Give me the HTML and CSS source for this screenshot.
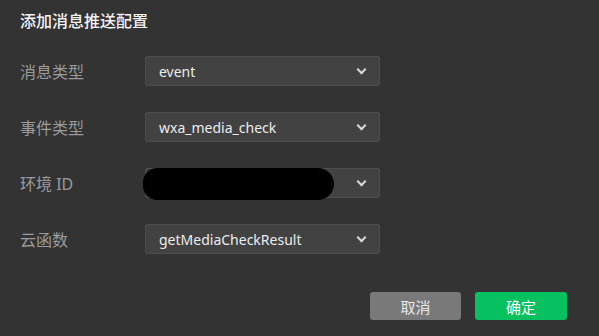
FILE: index.html
```html
<!DOCTYPE html>
<html lang="zh">

<head>
    <meta charset="UTF-8">
    <title>添加消息推送配置</title>
    <link rel="stylesheet" href="styles.css">
</head>

<body>
    <div class="dialog">
        <h1 class="dialog-title">添加消息推送配置</h1>

        <!-- 配置表单 -->
        <div class="form">
            <label class="form-label">消息类型</label>
            <div class="select">
                <span class="select-value">event</span>
                <span class="chevron"></span>
            </div>

            <label class="form-label">事件类型</label>
            <div class="select">
                <span class="select-value">wxa_media_check</span>
                <span class="chevron"></span>
            </div>

            <label class="form-label">环境 ID</label>
            <div class="select redacted">
                <span class="select-value"></span>
                <span class="chevron"></span>
                <span class="blot"></span>
            </div>

            <label class="form-label">云函数</label>
            <div class="select">
                <span class="select-value">getMediaCheckResult</span>
                <span class="chevron"></span>
            </div>
        </div>

        <!-- 底部按钮 -->
        <div class="footer">
            <button class="btn btn-cancel">取消</button>
            <button class="btn btn-ok">确定</button>
        </div>
    </div>
</body>

</html>
```

FILE: styles.css
```css
* {
    margin: 0;
    padding: 0;
    box-sizing: border-box;
}

body {
    background-color: #333333;
    font-family: "Noto Sans", "Noto Sans CJK SC", sans-serif;
    font-size: 14px;
    color: #e6e6e6;
    width: 599px;
    height: 336px;
    overflow: hidden;
}

.dialog {
    padding: 10px 32px 0 20px;
}

.dialog-title {
    font-size: 16px;
    font-weight: 500;
    line-height: 22px;
    color: #f2f2f2;
}

/* 表单 */
.form {
    display: grid;
    grid-template-columns: 125px 235px;
    grid-auto-rows: 30px;
    row-gap: 26px;
    margin-top: 24px;
    align-items: center;
}

.form-label {
    color: #9c9c9c;
    font-size: 16px;
}

.select {
    position: relative;
    height: 30px;
    display: flex;
    align-items: center;
    justify-content: space-between;
    padding: 0 14px 0 13px;
    background-color: #424242;
    border: 1px solid #4d4d4d;
    border-radius: 2px;
}

.select-value {
    color: #ececec;
    font-size: 14px;
}

.chevron {
    width: 7px;
    height: 7px;
    border-right: 2px solid #d8d8d8;
    border-bottom: 2px solid #d8d8d8;
    transform: rotate(45deg);
    margin-top: -4px;
}

/* 遮挡 */
.blot {
    position: absolute;
    left: -3px;
    top: -1px;
    width: 191px;
    height: 32px;
    background-color: #000000;
    border-radius: 16px 18px 18px 16px;
}

/* 按钮 */
.footer {
    display: flex;
    justify-content: flex-end;
    gap: 14px;
    margin-top: 38px;
}

.btn {
    width: 92px;
    height: 28px;
    border: none;
    border-radius: 3px;
    font-family: "Noto Sans", "Noto Sans CJK SC", sans-serif;
    font-size: 15px;
    color: #f5f5f5;
    cursor: pointer;
}

.btn-cancel {
    width: 91px;
    background-color: #797979;
    color: #e8e8e8;
}

.btn-ok {
    background-color: #07c160;
    color: #ffffff;
}
```
